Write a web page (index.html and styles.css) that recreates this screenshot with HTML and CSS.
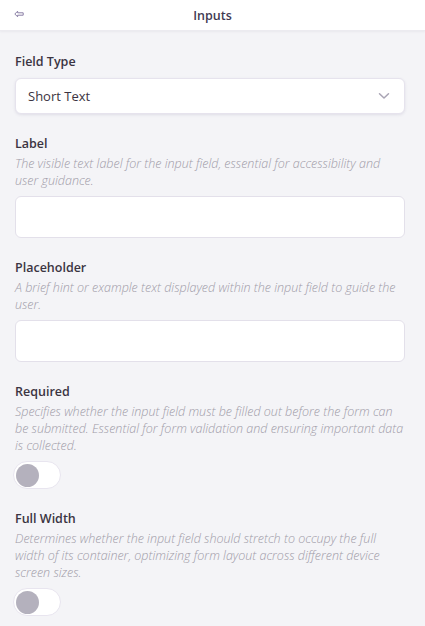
FILE: index.html
```html
<!DOCTYPE html>
<html lang="en">
<head>
<meta charset="utf-8">
<title>Inputs</title>
<link rel="stylesheet" href="styles.css">
</head>
<body>
<header class="topbar">
  <button class="back" aria-label="Back">
    <svg width="10" height="8" viewBox="0 0 10 8"><path d="M0.8 4 L3.6 1.2 V2.8 H9.2 V5.2 H3.6 V6.8 Z" fill="none" stroke="#8a7fa6" stroke-width="1" stroke-linejoin="round"/></svg>
  </button>
  <h1 class="title">Inputs</h1>
</header>
<main class="panel">
  <section class="group">
    <div class="name">Field Type</div>
    <div class="select">
      <span>Short Text</span>
      <svg width="12" height="8" viewBox="0 0 12 8"><path d="M1.5 1.8 L6 6 L10.5 1.8" fill="none" stroke="#a9a4b4" stroke-width="1.5" stroke-linecap="round" stroke-linejoin="round"/></svg>
    </div>
  </section>
  <section class="group">
    <div class="name">Label</div>
    <p class="desc">The visible text label for the input field, essential for accessibility and user guidance.</p>
    <div class="input"></div>
  </section>
  <section class="group">
    <div class="name">Placeholder</div>
    <p class="desc">A brief hint or example text displayed within the input field to guide the user.</p>
    <div class="input"></div>
  </section>
  <section class="group">
    <div class="name">Required</div>
    <p class="desc">Specifies whether the input field must be filled out before the form can be submitted. Essential for form validation and ensuring important data is collected.</p>
    <div class="toggle"><span class="knob"></span></div>
  </section>
  <section class="group">
    <div class="name">Full Width</div>
    <p class="desc">Determines whether the input field should stretch to occupy the full width of its container, optimizing form layout across different device screen sizes.</p>
    <div class="toggle"><span class="knob"></span></div>
  </section>
</main>
</body>
</html>
```
FILE: styles.css
```css
* { box-sizing: border-box; }
html, body {
  margin: 0;
  padding: 0;
  background: #f4f4f7;
  font-family: "Open Sans", "Noto Sans", sans-serif;
  color: #3b3442;
}
.topbar {
  position: relative;
  height: 31px;
  background: #ffffff;
  display: flex;
  align-items: center;
  justify-content: center;
  box-shadow: 0 1px 2px rgba(60, 50, 80, 0.06);
  border-bottom: 1px solid #ecebf0;
}
.back {
  position: absolute;
  left: 14px;
  top: 10px;
  border: 0;
  background: none;
  padding: 0;
  display: flex;
}
.title {
  margin: 0;
  font-size: 12.5px;
  font-weight: 600;
  color: #3f3a52;
}
.panel {
  padding: 22px 20px 0 15px;
  display: flex;
  flex-direction: column;
  gap: 21px;
}
.group {
  display: flex;
  flex-direction: column;
}
.name {
  font-size: 12.5px;
  line-height: 18px;
  font-weight: 600;
  color: #3b3442;
  margin-bottom: 7px;
}
.group .desc {
  margin: -5px 0 7px;
  font-size: 12.5px;
  line-height: 17px;
  font-style: italic;
  font-weight: 300;
  color: #a09ba7;
}
.select {
  height: 36px;
  background: #ffffff;
  border: 1px solid #e6e3ed;
  border-radius: 6px;
  box-shadow: 0 1px 3px rgba(80, 70, 120, 0.12);
  display: flex;
  align-items: center;
  justify-content: space-between;
  padding: 0 14px 0 12px;
  font-size: 13px;
  color: #3b3442;
}
.input {
  height: 42px;
  background: #ffffff;
  border: 1px solid #e3e0ea;
  border-radius: 6px;
}
.toggle {
  width: 48px;
  height: 28px;
  border-radius: 14px;
  background: #ffffff;
  border: 1px solid #e8e5ef;
  padding: 2px;
  display: flex;
  align-items: center;
  margin-left: -2px;
}
.knob {
  width: 23px;
  height: 23px;
  border-radius: 50%;
  background: #b4b1bd;
}
```
